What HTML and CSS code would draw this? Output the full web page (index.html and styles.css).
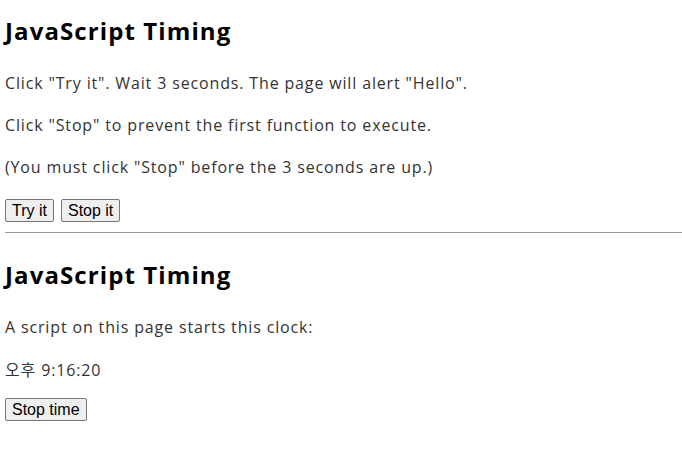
FILE: index.html
```html
<!DOCTYPE html>
<html lang="ko">
<head>
<meta charset="utf-8">
<title>JavaScript Timing</title>
<link rel="stylesheet" href="styles.css">
</head>
<body>
<section class="demo">
<h2 class="title">JavaScript Timing</h2>
<p class="text">Click "Try it". Wait 3 seconds. The page will alert "Hello".</p>
<p class="text">Click "Stop" to prevent the first function to execute.</p>
<p class="text">(You must click "Stop" before the 3 seconds are up.)</p>
<div class="buttons">
<button class="btn">Try it</button>
<button class="btn">Stop it</button>
</div>
</section>
<hr class="rule">
<section class="demo demo-second">
<h2 class="title">JavaScript Timing</h2>
<p class="text">A script on this page starts this clock:</p>
<p class="text clock">오후 9:16:20</p>
<div class="buttons buttons-last">
<button class="btn">Stop time</button>
</div>
</section>
</body>
</html>
```
FILE: styles.css
```css
html, body {
  background: #fff;
}
body {
  margin: 0;
  padding: 0 0 0 5px;
  font-family: "Open Sans", "Noto Sans CJK KR", sans-serif;
  font-size: 16px;
  color: #333;
}
.demo {
  display: flow-root;
}
.title {
  font-size: 24px;
  font-weight: bold;
  color: #000;
  margin: 14px 0 22px;
  line-height: 34px;
  letter-spacing: 1.1px;
}
.demo-second .title {
  margin-top: 25px;
}
.text {
  margin: 16px 0;
  line-height: 26px;
  letter-spacing: 0.85px;
}
.clock {
  margin: 17px 0 15px;
}
.buttons {
  display: flex;
  gap: 7px;
  margin: 19px 0 0;
}
.buttons-last {
  margin-top: 15px;
}
.btn {
  font-family: "Liberation Sans", Arial, sans-serif;
  font-size: 16px;
  line-height: 19px;
  color: #000;
  background: #efefef;
  border: 1px solid #767676;
  border-radius: 2px;
  padding: 1px 6px;
  height: 23px;
}
.rule {
  border: 0;
  border-top: 1px solid #999;
  margin: 10px 0 0;
  height: 0;
}
```
